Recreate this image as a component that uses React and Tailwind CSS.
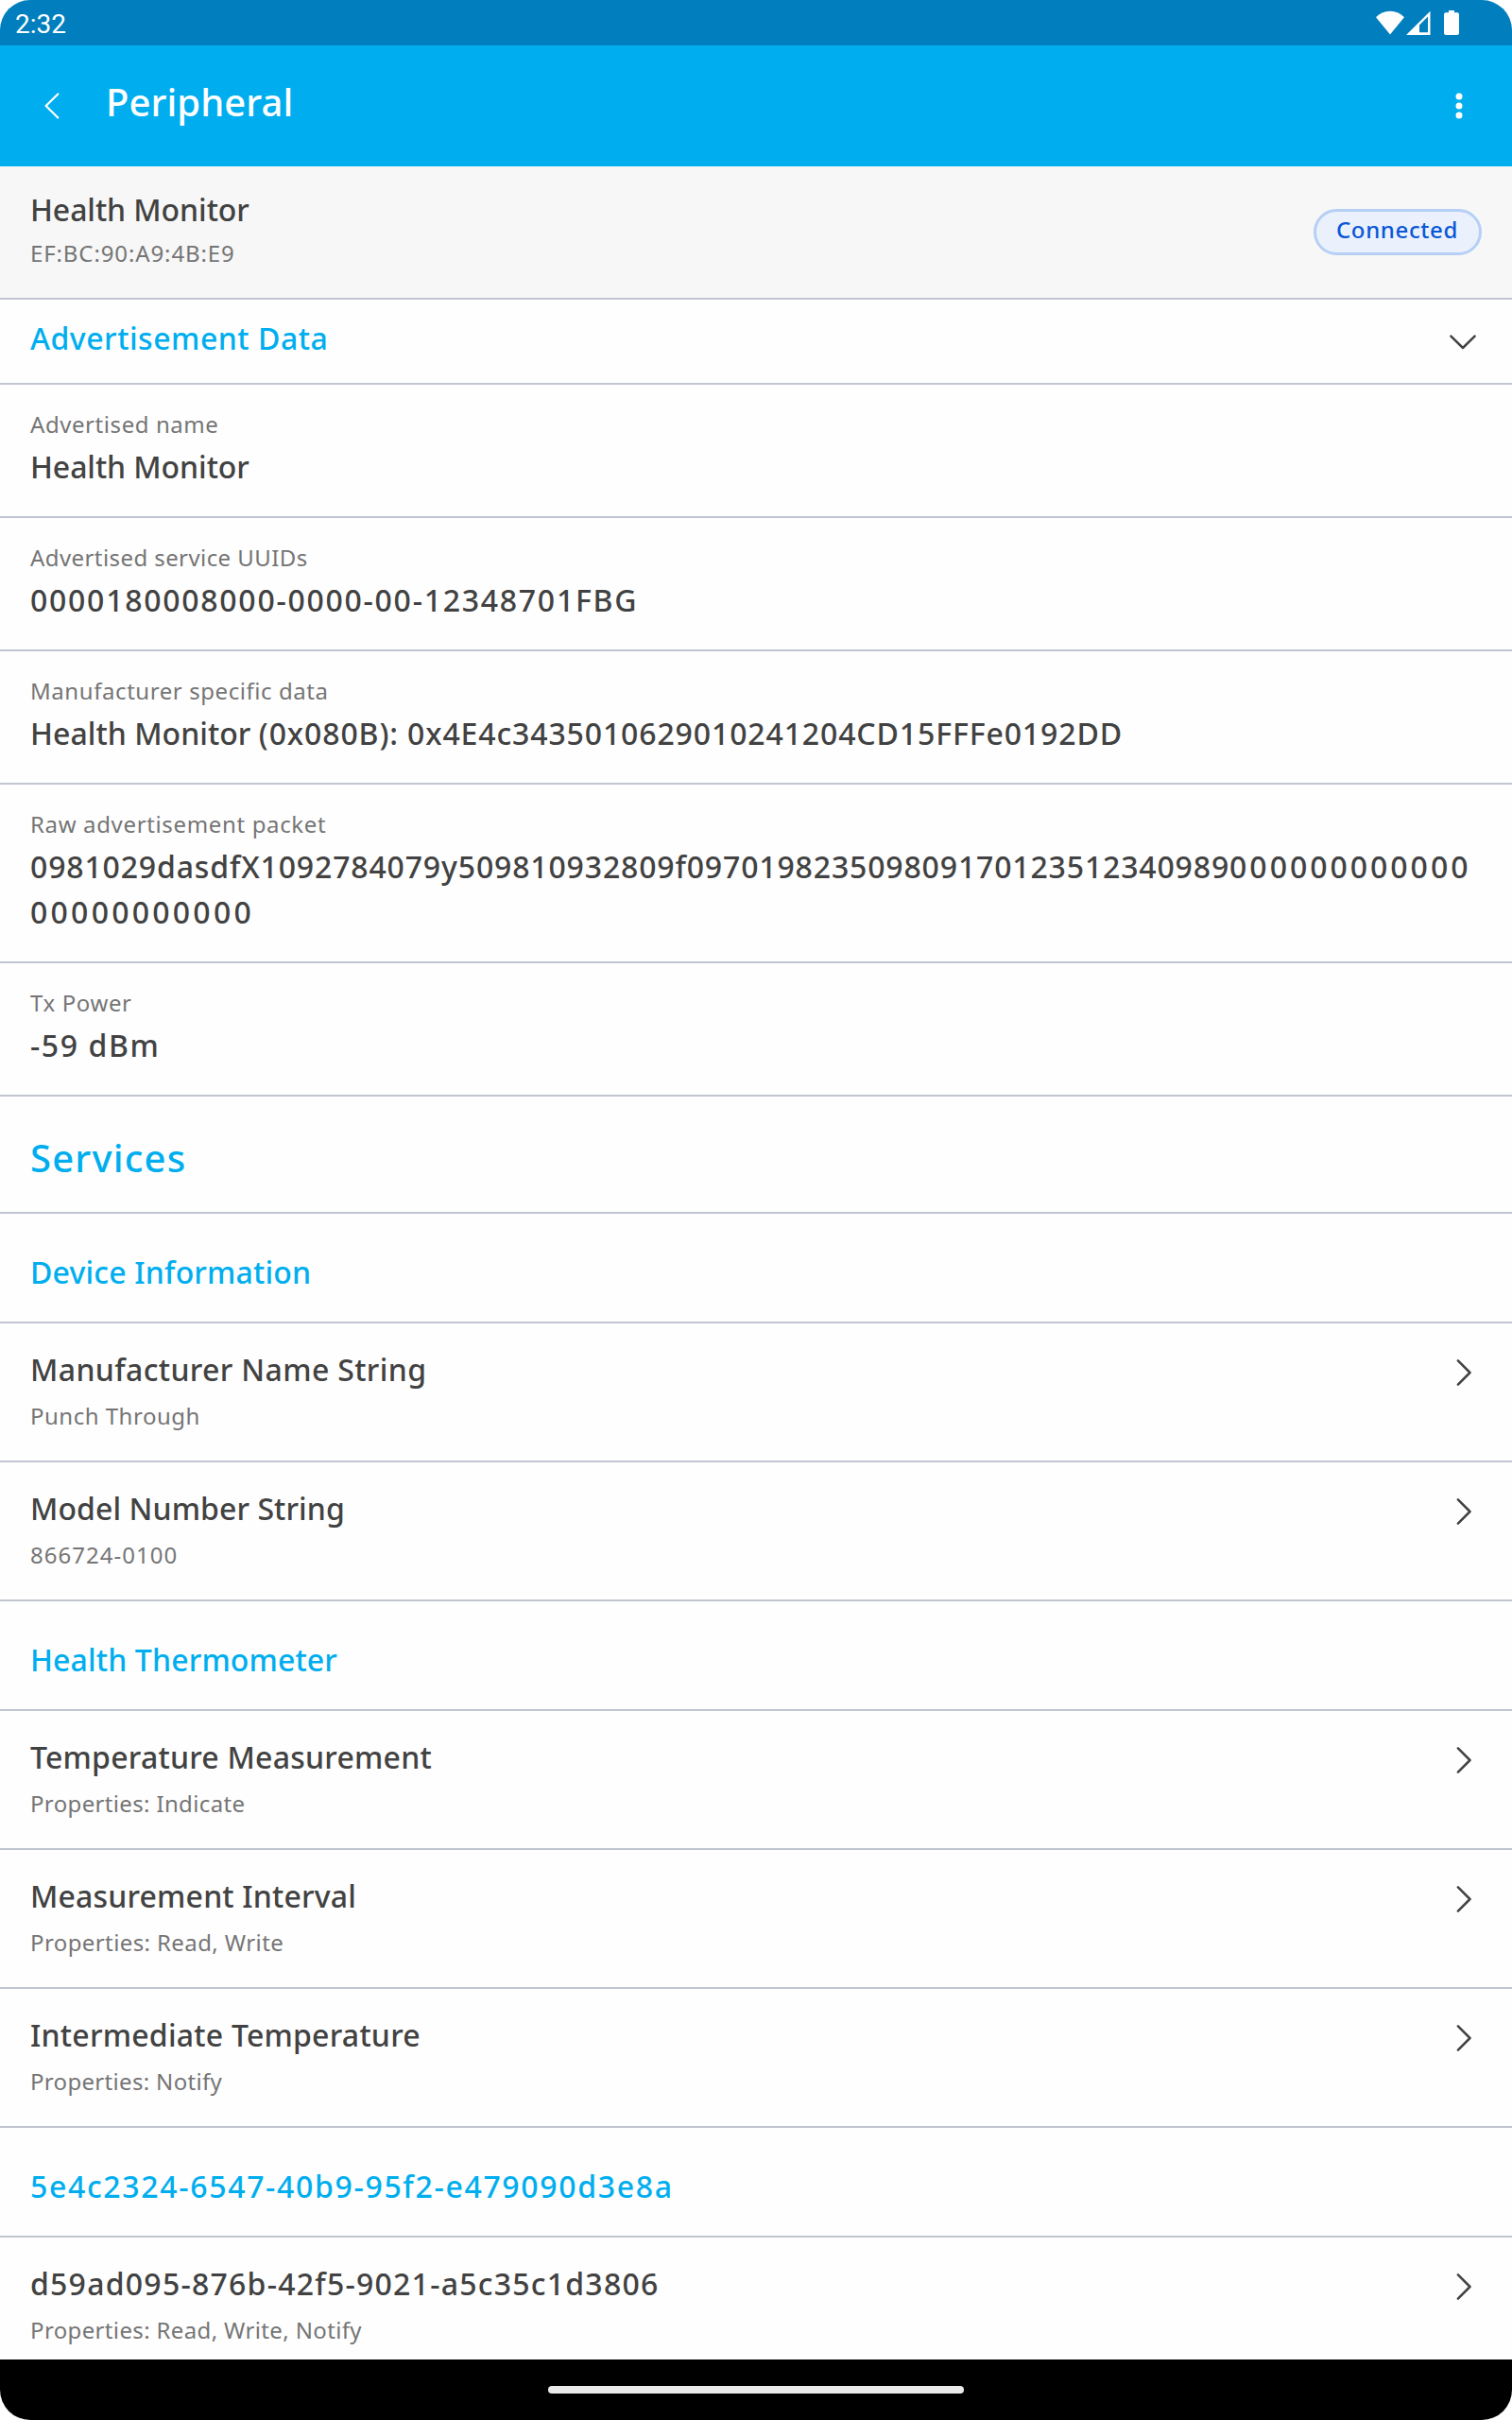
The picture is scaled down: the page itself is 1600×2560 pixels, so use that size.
import React from 'react';

// --- Advertisement data ---
const advertisement = [
    {
        label: 'Advertised name', labelClass: 'tracking-[0.57px]',
        value: 'Health Monitor', valueClass: 'tracking-[-0.08px]',
    },
    {
        label: 'Advertised service UUIDs', labelClass: 'tracking-[0.42px]',
        value: '0000180008000-0000-00-12348701FBG', valueClass: 'tracking-[1.73px]',
    },
    {
        label: 'Manufacturer specific data', labelClass: 'tracking-[0.57px]',
        value: (
            <>
                <span className="tracking-[0.04px]">Health Monitor </span>
                <span>(0x080B): 0x4E4c3435010629010241204CD15FFFe0192DD</span>
            </>
        ),
        valueClass: 'tracking-[0.87px]',
    },
    {
        label: 'Raw advertisement packet', labelClass: 'tracking-[0.65px]',
        value: (
            <>
                <span>0981029dasdfX1092784079y509810932809f097019823509809170123512340989</span>
                <span className="tracking-[2.98px]">000000000000</span>
                <br />
                <span className="tracking-[3.24px]">00000000000</span>
            </>
        ),
        valueClass: 'tracking-[0.84px]',
    },
    {
        label: 'Tx Power', labelClass: 'tracking-[0.61px]',
        value: '-59 dBm', valueClass: 'tracking-[1.6px]',
    },
];

// --- Services and their characteristics ---
const services = [
    {
        name: 'Device Information', nameClass: 'tracking-[0.18px]',
        characteristics: [
            { name: 'Manufacturer Name String', nameClass: 'tracking-[0.36px]', detail: 'Punch Through', detailClass: 'tracking-[0.5px]' },
            { name: 'Model Number String', nameClass: 'tracking-[0.08px]', detail: '866724-0100', detailClass: 'tracking-[1.02px]' },
        ],
    },
    {
        name: 'Health Thermometer', nameClass: 'tracking-[0.14px]',
        characteristics: [
            { name: 'Temperature Measurement', nameClass: 'tracking-[0.23px]', detail: 'Properties: Indicate', detailClass: 'tracking-[0.35px]' },
            { name: 'Measurement Interval', nameClass: 'tracking-[0.17px]', detail: 'Properties: Read, Write', detailClass: 'tracking-[0.4px]' },
            { name: 'Intermediate Temperature', nameClass: 'tracking-[0.23px]', detail: 'Properties: Notify', detailClass: 'tracking-[0.32px]' },
        ],
    },
    {
        name: '5e4c2324-6547-40b9-95f2-e479090d3e8a', nameClass: 'tracking-[1.67px]',
        characteristics: [
            { name: 'd59ad095-876b-42f5-9021-a5c35c1d3806', nameClass: 'tracking-[1.24px]', detail: 'Properties: Read, Write, Notify', detailClass: 'tracking-[0.36px]' },
        ],
    },
];

// --- Icons ---
const WifiIcon = () => (
    <svg width="30" height="26" viewBox="0 0 30 26" fill="white">
        <path d="M15 25.5 0 7.2C4 3 9 .8 15 .8S26 3 30 7.2Z" />
    </svg>
);

const SignalIcon = () => (
    <svg width="26" height="26" viewBox="0 0 26 26" fill="white">
        <path fillRule="evenodd" d="M0 26 25.5 .8V26ZM14 15.4V23.2H23V6.6Z" />
    </svg>
);

const BatteryIcon = () => (
    <svg width="16" height="26" viewBox="0 0 16 26" fill="white">
        <path d="M5 0H11V2.3H14A2 2 0 0 1 16 4.3V24A2 2 0 0 1 14 26H2A2 2 0 0 1 0 24V4.3A2 2 0 0 1 2 2.3H5Z" />
    </svg>
);

const BackIcon = () => (
    <svg width="16" height="28" viewBox="0 0 16 28" fill="none" stroke="white" strokeWidth="2.2" strokeLinecap="round" strokeLinejoin="round">
        <path d="M14.3 1.5 1.6 14 14.3 26.5" />
    </svg>
);

const MoreIcon = () => (
    <svg width="8" height="28" viewBox="0 0 8 28" fill="white">
        <circle cx="4" cy="4" r="3.5" />
        <circle cx="4" cy="14" r="3.5" />
        <circle cx="4" cy="24" r="3.5" />
    </svg>
);

const ChevronDown = () => (
    <svg width="28" height="16" viewBox="0 0 28 16" fill="none" stroke="#424242" strokeWidth="2.5" strokeLinecap="round" strokeLinejoin="round">
        <path d="M1.4 1.6 14 14 26.6 1.6" />
    </svg>
);

const ChevronRight = () => (
    <svg width="16" height="28" viewBox="0 0 16 28" fill="none" stroke="#424242" strokeWidth="2.5" strokeLinecap="round" strokeLinejoin="round">
        <path d="M1.9 1.4 14.5 14 1.9 26.6" />
    </svg>
);

// --- Rows ---
const AdvertisementRow = ({ label, labelClass, value, valueClass }) => (
    <div className="border-b-2 border-[#c1c5d0] px-8 pt-6 pb-7">
        <p className={`text-2xl leading-9 text-[#757575] ${labelClass}`}>{label}</p>
        <p className={`mt-[3px] text-[32px] leading-[48px] font-medium whitespace-nowrap ${valueClass}`}>{value}</p>
    </div>
);

const ServiceHeader = ({ name, nameClass }) => (
    <div className="h-[116px] border-b-2 border-[#c1c5d0] px-8 pt-[38px]">
        <h3 className={`text-[32px] leading-[48px] font-medium text-[#00aeef] ${nameClass}`}>{name}</h3>
    </div>
);

const CharacteristicRow = ({ name, nameClass, detail, detailClass }) => (
    <div className="flex h-[147px] shrink-0 justify-between border-b-2 border-[#c1c5d0] pr-[43px] pl-8">
        <div className="pt-[25px]">
            <p className={`text-[32px] leading-[48px] font-medium ${nameClass}`}>{name}</p>
            <p className={`mt-[7px] text-2xl leading-9 text-[#757575] ${detailClass}`}>{detail}</p>
        </div>
        <div className="pt-[38px]">
            <ChevronRight />
        </div>
    </div>
);

const App = () => {
    return (
        <div className="flex h-[2560px] w-[1600px] flex-col overflow-hidden rounded-[32px] bg-[#fefefe] font-['Noto_Sans',sans-serif] text-[#424242]">
            {/* Status bar */}
            <div className="flex h-12 shrink-0 items-center justify-between bg-[#007ebd] pr-14 pl-4">
                <span className="pt-1 font-['Roboto',sans-serif] text-[28px] leading-8 text-white">2:32</span>
                <div className="flex items-center">
                    <WifiIcon />
                    <div className="ml-0.5"><SignalIcon /></div>
                    <div className="ml-3.5"><BatteryIcon /></div>
                </div>
            </div>

            {/* App bar */}
            <header className="flex h-32 shrink-0 bg-[#00aeef] pr-[52px] pl-[47px]">
                <div className="w-[65px] pt-[50px]"><BackIcon /></div>
                <h1 className="grow pt-9 text-[40px] leading-[48px] font-medium tracking-[0.06px] text-white">Peripheral</h1>
                <div className="pt-[50px]"><MoreIcon /></div>
            </header>

            {/* Device */}
            <div className="flex h-[141px] shrink-0 justify-between border-b-2 border-[#c1c5d0] bg-[#f7f7f7] px-8">
                <div className="pt-[22px]">
                    <h2 className="text-[32px] leading-[48px] font-medium tracking-[-0.08px]">Health Monitor</h2>
                    <p className="mt-1 text-2xl leading-9 tracking-[0.88px] text-[#757575]">EF:BC:90:A9:4B:E9</p>
                </div>
                <div className="mt-[45px] h-[49px] w-[178px] rounded-full border-3 border-[#b6cff5] bg-[#eaf1fc] pt-px pl-[21px]">
                    <span className="block text-2xl leading-9 font-medium tracking-[0.62px] text-[#0b57d8]">Connected</span>
                </div>
            </div>

            <main className="min-h-0 grow overflow-hidden">
                <div className="flex h-[90px] justify-between border-b-2 border-[#c1c5d0] pr-[38px] pl-8">
                    <h2 className="pt-[17px] text-[32px] leading-[48px] font-medium tracking-[0.52px] text-[#00aeef]">Advertisement Data</h2>
                    <div className="pt-[37px]"><ChevronDown /></div>
                </div>
                {advertisement.map(item => (
                    <AdvertisementRow key={item.label} {...item} />
                ))}

                <div className="h-[124px] border-b-2 border-[#c1c5d0] px-8 pt-[41px]">
                    <h2 className="text-[40px] leading-[48px] font-medium tracking-[1.2px] text-[#00aeef]">Services</h2>
                </div>
                {services.map(service => (
                    <section key={service.name}>
                        <ServiceHeader name={service.name} nameClass={service.nameClass} />
                        {service.characteristics.map(item => (
                            <CharacteristicRow key={item.name} {...item} />
                        ))}
                    </section>
                ))}
            </main>

            {/* Navigation bar */}
            <div className="flex h-16 shrink-0 items-center justify-center bg-black">
                <div className="h-2 w-[440px] rounded-full bg-[#ebebeb]" />
            </div>
        </div>
    );
};

export default App;
